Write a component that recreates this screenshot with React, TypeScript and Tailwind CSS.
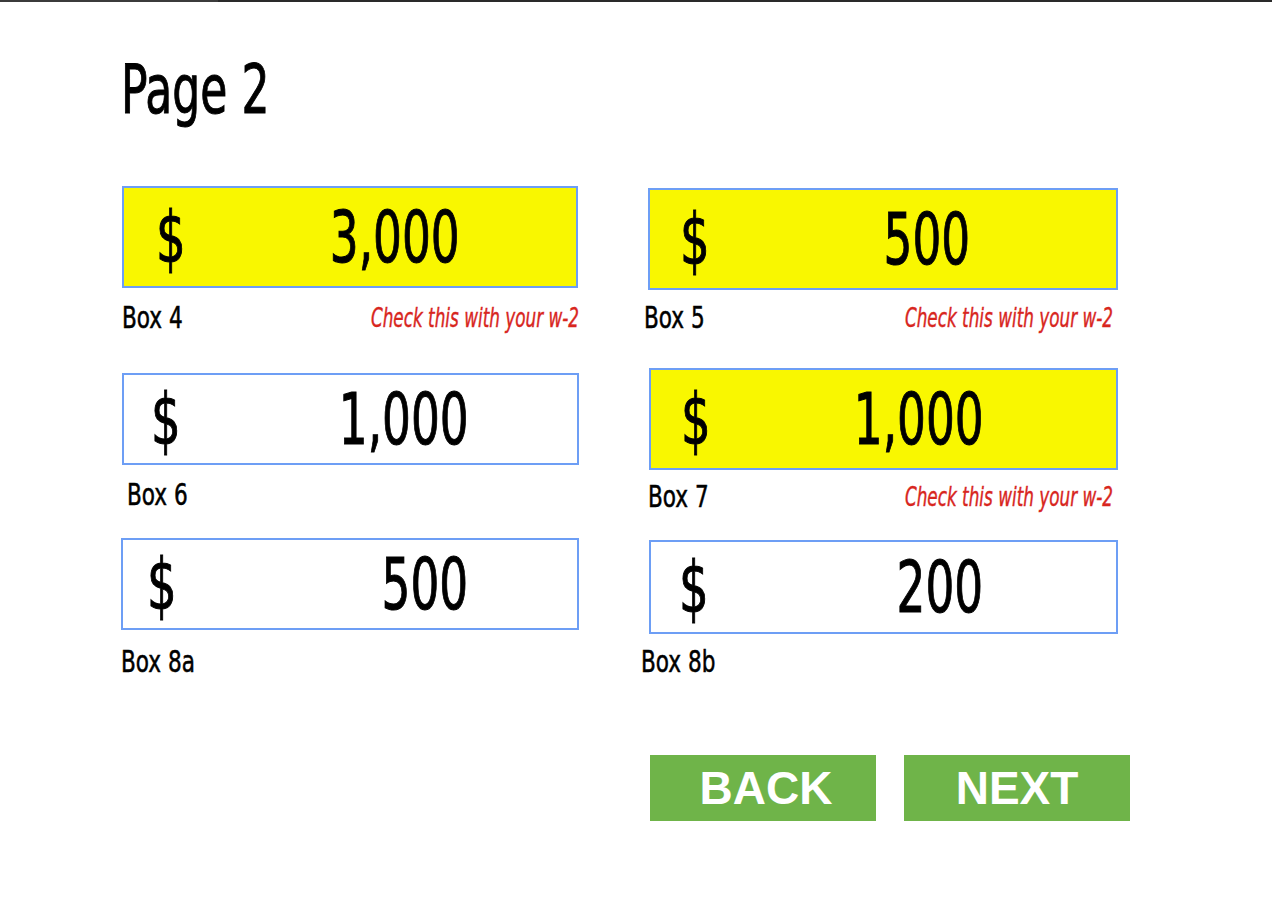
import type {ReactNode} from 'react'

const condensed = {fontFamily: '"DejaVu Sans Condensed", "DejaVu Sans", sans-serif', fontStretch: 'condensed'}

type FieldProps = {
  boxClass: string
  dollarClass: string
  valueClass: string
  value: string
  label: string
  labelClass: string
  check?: boolean
}

/** One W-2 amount box with its caption underneath. */
function Field({boxClass, dollarClass, valueClass, value, label, labelClass, check}: FieldProps) {
  return (
    <div className="flex flex-col">
      <div className={`flex items-center border-2 border-[#6d9ef5] ${boxClass}`}>
        <span className={`w-[60px] text-[72px] leading-none text-black [-webkit-text-stroke:1px_black] ${dollarClass}`}>
          <span className="inline-block origin-left scale-x-[0.72]">$</span>
        </span>
        <span className={`w-[200px] text-center text-[72px] leading-none text-black [-webkit-text-stroke:1px_black] ${valueClass}`}>
          <span className="inline-block scale-x-[0.7]">{value}</span>
        </span>
      </div>
      <div className={`flex h-[48px] items-start justify-between ${labelClass}`}>
        <span className="inline-block origin-left scale-x-[0.8] text-[30px] leading-[32px] text-black [-webkit-text-stroke:0.5px_black]">
          {label}
        </span>
        {check ? (
          <span className="mt-[1px] inline-block origin-right scale-x-[0.72] text-[26px] italic leading-[30px] text-[#d8261e] [-webkit-text-stroke:0.4px_#d8261e]">
            Check this with your w-2
          </span>
        ) : null}
      </div>
    </div>
  )
}

function Button({children, className}: {children: ReactNode; className?: string}) {
  return (
    <button
      className={`flex h-[66px] w-[226px] items-center justify-center bg-[#6fb449] text-[46px] font-bold leading-none text-white ${className ?? ''}`}
      style={{fontFamily: '"Liberation Sans", Arial, sans-serif'}}
    >
      {children}
    </button>
  )
}

export default function App() {
  return (
    <div className="min-h-[900px] w-[1272px] bg-white" style={condensed}>
      <div className="flex h-[2px]">
        <div className="w-[218px] bg-[#3b3b3b]" />
        <div className="flex-1 bg-[#2a2a2a]" />
      </div>

      <div className="pl-[121px]">
        <h1 className="mt-[48px] h-[80px] text-[68px] leading-[80px] text-black [-webkit-text-stroke:1px_black]">
          <span className="inline-block origin-left scale-x-[0.72]">Page 2</span>
        </h1>

        <div className="mt-[56px] flex gap-[69px]">
          {/* left column */}
          <div className="flex w-[458px] flex-col">
            <Field
              boxClass="h-[102px] bg-[#f9f700] mx-[1px]"
              dollarClass="ml-[32px]"
              valueClass="ml-[79px]"
              value="3,000"
              label="Box 4"
              labelClass="pt-[14px] pl-[1px]"
              check
            />
            <Field
              boxClass="mt-[37px] h-[92px] bg-white ml-[1px]"
              dollarClass="ml-[27px]"
              valueClass="ml-[93px]"
              value="1,000"
              label="Box 6"
              labelClass="pt-[14px] pl-[6px]"
            />
            <Field
              boxClass="mt-[25px] h-[92px] bg-white"
              dollarClass="ml-[24px]"
              valueClass="ml-[118px]"
              value="500"
              label="Box 8a"
              labelClass="pt-[16px]"
            />
          </div>

          {/* right column */}
          <div className="flex w-[470px] flex-col">
            <Field
              boxClass="mt-[2px] h-[102px] bg-[#f9f700]"
              dollarClass="ml-[30px]"
              valueClass="ml-[87px]"
              value="500"
              label="Box 5"
              labelClass="pt-[12px] pr-[5px] -ml-[4px]"
              check
            />
            <Field
              boxClass="mt-[30px] h-[102px] bg-[#f9f700] ml-[1px]"
              dollarClass="ml-[30px]"
              valueClass="ml-[78px]"
              value="1,000"
              label="Box 7"
              labelClass="pt-[11px] pr-[5px]"
              check
            />
            <Field
              boxClass="mt-[22px] h-[94px] bg-white ml-[1px]"
              dollarClass="ml-[28px]"
              valueClass="ml-[101px]"
              value="200"
              label="Box 8b"
              labelClass="pt-[12px] -ml-[7px]"
            />
          </div>
        </div>

        <div className="ml-[529px] mt-[73px] flex gap-[28px]">
          <Button className="pl-[6px]">BACK</Button>
          <Button>NEXT</Button>
        </div>
      </div>
    </div>
  )
}
